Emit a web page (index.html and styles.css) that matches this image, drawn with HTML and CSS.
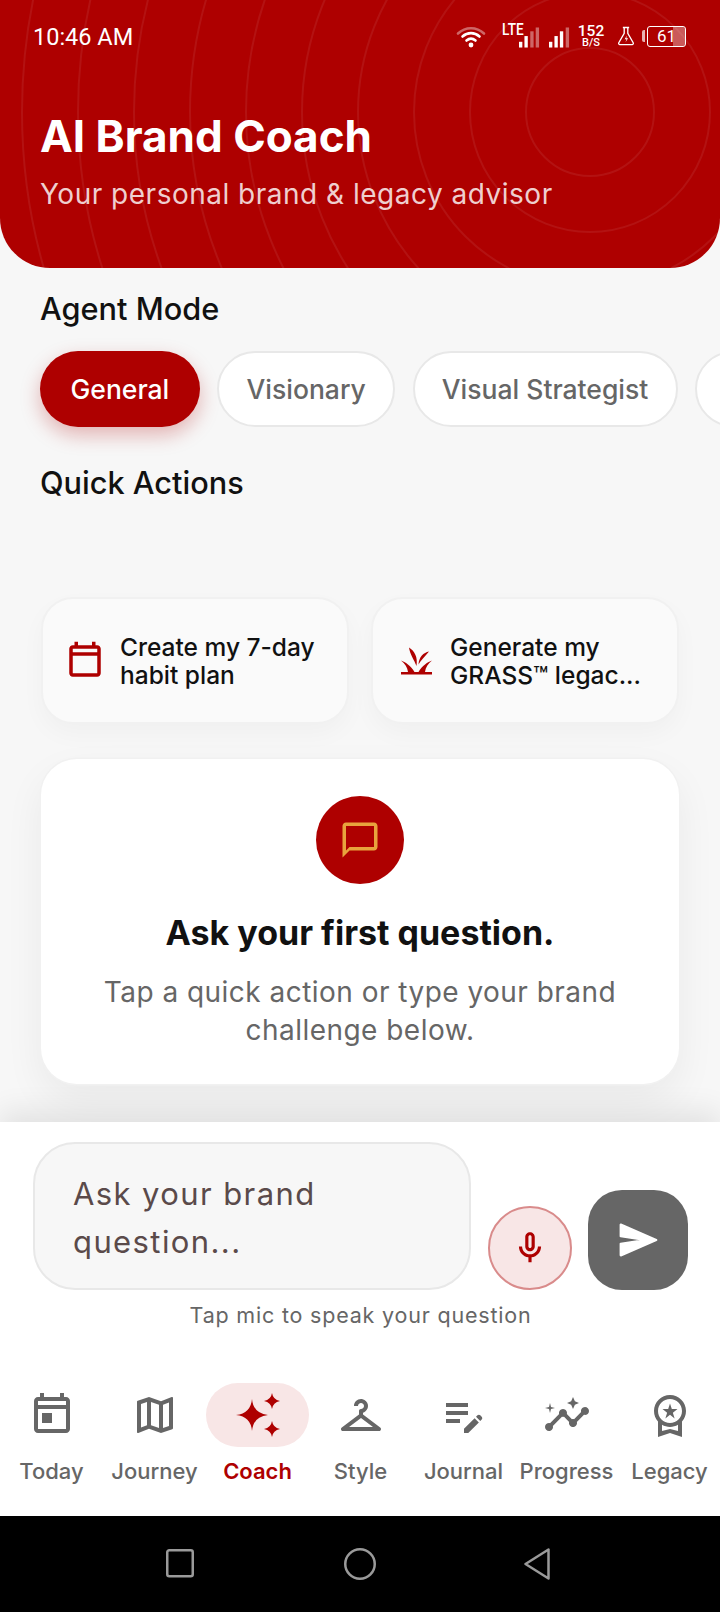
FILE: index.html
```html
<!DOCTYPE html>
<html lang="en">
<head>
<meta charset="utf-8">
<title>AI Brand Coach</title>
<link rel="stylesheet" href="styles.css">
</head>
<body>
<div class="phone">
  <header class="hero">
    <svg class="rings" viewBox="0 0 720 268" aria-hidden="true">
      <circle cx="590" cy="112" r="64"/><circle cx="590" cy="112" r="120"/><circle cx="590" cy="112" r="176"/><circle cx="590" cy="112" r="232"/><circle cx="590" cy="112" r="288"/><circle cx="590" cy="112" r="344"/><circle cx="590" cy="112" r="400"/><circle cx="590" cy="112" r="456"/><circle cx="590" cy="112" r="512"/><circle cx="590" cy="112" r="568"/>
    </svg>
    <div class="status">
      <span class="time">10:46 AM</span>
      <div class="status-icons">
        <svg class="ic-wifi" viewBox="0 0 30 24"><path class="dim" d="M2 9.500C9.500 2.500 20.500 2.500 28 9.500" /><path d="M6.500 12.500C11.500 8 18.500 8 23.500 12.500M10.500 16.500C13.500 14 16.500 14 19.500 16.500"/><circle cx="15" cy="21" r="2.400"/></svg>
        <div class="lte"><span class="lte-text">LTE</span>
          <svg class="bars" viewBox="0 0 22 21"><rect x="0" y="15" width="3.500" height="6"/><rect x="5.700" y="9" width="3.500" height="12"/><rect class="dimf" x="11.800" y="4" width="3.500" height="17"/><rect class="dimf" x="17.500" y="0" width="3.500" height="21"/></svg>
        </div>
        <svg class="bars bars2" viewBox="0 0 22 21"><rect x="0" y="15" width="3.500" height="6"/><rect x="5.700" y="9" width="3.500" height="12"/><rect x="11.400" y="4" width="3.500" height="17"/><rect class="dimf" x="17.500" y="0" width="3.500" height="21"/></svg>
        <div class="speed"><span>152</span><span class="unit">B/S</span></div>
        <svg class="flask" viewBox="0 0 20 22"><path d="M6.500 1.500h7M8 1.500v6.500L2 18.500c-.5 1 .2 2 1.200 2h13.600c1 0 1.700-1 1.200-2L12 8V1.500"/><path class="flash" d="M11 10.500l-2.500 4h2l-1 3.500 2.800-4.500h-2z"/></svg>
        <div class="battery"><span class="nub"></span><div class="cell"><span class="fill"></span><span class="level">61</span></div></div>
      </div>
    </div>
    <h1 class="title">AI Brand Coach</h1>
    <p class="subtitle">Your personal brand &amp; legacy advisor</p>
  </header>

  <main class="content">
    <h2 class="section">Agent Mode</h2>
    <div class="chips">
      <span class="chip chip-on">General</span>
      <span class="chip">Visionary</span>
      <span class="chip">Visual Strategist</span>
      <span class="chip chip-more"></span>
    </div>
    <h2 class="section section-qa">Quick Actions</h2>
    <div class="actions">
      <div class="action">
        <svg class="action-ic" viewBox="0 0 24 24"><path d="M19 3h-1V1h-2v2H8V1H6v2H5c-1.100 0-2 .9-2 2v14c0 1.100.9 2 2 2h14c1.100 0 2-.9 2-2V5c0-1.100-.9-2-2-2zm0 16H5V9h14v10zm0-12H5V5h14v2z"/></svg>
        <span class="action-text">Create my 7-day<br>habit plan</span>
      </div>
      <div class="action">
        <svg class="action-ic" viewBox="2 5.500 42 42"><path d="M9 37.500h31V40H9zM9 26c4 1.500 10 5 13.500 11.500H16C15.500 33 13 29 9 26zM40 26c-4 1.500-10 5-13.500 11.500H33C33.500 33 36 29 40 26zM17 13c5.500 3.500 9 9.500 7.500 18.500C22 25 18 20 17 13zM37 17c-5.500 1-10 5.500-10.500 13C29 25.500 33 22 37 17z"/></svg>
        <span class="action-text">Generate my<br>GRASS™ legac...</span>
      </div>
    </div>
    <section class="empty">
      <div class="empty-badge">
        <svg viewBox="0 0 24 24"><path d="M20 2H4c-1.100 0-2 .9-2 2v18l4-4h14c1.100 0 2-.9 2-2V4c0-1.100-.9-2-2-2zm0 14H6l-2 2V4h16v12z"/></svg>
      </div>
      <h3 class="empty-title">Ask your first question.</h3>
      <p class="empty-text">Tap a quick action or type your brand challenge below.</p>
    </section>
  </main>

  <section class="composer">
    <div class="composer-row">
      <div class="input">Ask your brand question...</div>
      <button class="mic" aria-label="Speak">
        <svg viewBox="0 0 24 24"><path d="M12 14c1.660 0 3-1.340 3-3V5c0-1.660-1.340-3-3-3S9 3.340 9 5v6c0 1.660 1.340 3 3 3zm-1-9c0-.55.45-1 1-1s1 .45 1 1v6c0 .55-.45 1-1 1s-1-.45-1-1V5zm6 6c0 2.760-2.240 5-5 5s-5-2.240-5-5H5c0 3.530 2.610 6.430 6 6.920V21h2v-3.080c3.390-.49 6-3.390 6-6.920h-2z"/></svg>
      </button>
      <button class="send" aria-label="Send">
        <svg viewBox="0 0 24 24"><path d="M3 20 21.500 12 3 4 3 10l13.500 2L3 14z"/></svg>
      </button>
    </div>
    <p class="hint">Tap mic to speak your question</p>
  </section>

  <nav class="tabs">
    <div class="tab"><span class="tab-ic"><svg viewBox="0 0 24 24"><path d="M19 3h-1V1h-2v2H8V1H6v2H5c-1.110 0-1.990.9-1.990 2L3 19c0 1.100.89 2 2 2h14c1.100 0 2-.9 2-2V5c0-1.100-.9-2-2-2zm0 16H5V9h14v10zm0-12H5V5h14v2zM7 11h5v5H7z"/></svg></span><span class="tab-label">Today</span></div>
    <div class="tab"><span class="tab-ic"><svg viewBox="0 0 24 24"><path d="M20.500 3l-.16.03L15 5.100 9 3 3.360 4.900c-.21.07-.36.25-.36.48V20.500c0 .28.22.5.5.5l.16-.03L9 18.900l6 2.100 5.640-1.900c.21-.07.36-.25.36-.48V3.500c0-.28-.22-.5-.5-.5zM10 5.470l4 1.400v11.660l-4-1.400V5.470zm-5 .99l3-1.010v11.700l-3 1.160V6.460zm14 11.080l-3 1.010V6.860l3-1.160v11.840z"/></svg></span><span class="tab-label">Journey</span></div>
    <div class="tab tab-on"><span class="tab-ic"><svg viewBox="0 0 24 24"><path d="M19 9q.5-3.300 4-4-3.500-.7-4-4-.5 3.300-4 4 3.500.7 4 4zM9 4q-.6 7.200-8 8 7.400.8 8 8 .6-7.200 8-8-7.400-.8-8-8zM19 15q-.5 3.300-4 4 3.500.7 4 4 .5-3.300 4-4-3.500-.7-4-4z"/></svg></span><span class="tab-label">Coach</span></div>
    <div class="tab"><span class="tab-ic"><svg viewBox="0 0 24 24"><path d="M21.600 18.200L13 11.750v-.91c1.650-.49 2.800-2.170 2.430-4.050-.26-1.310-1.300-2.400-2.610-2.700C10.540 3.570 8.500 5.300 8.500 7.500h2c0-.83.67-1.500 1.500-1.500s1.500.67 1.500 1.500c0 .84-.69 1.520-1.530 1.500-.54-.01-.97.45-.97.99v1.760L2.400 18.200c-.77.58-.36 1.800.6 1.800h18c.96 0 1.370-1.220.6-1.800zM6 18l6-4.500 6 4.500H6z"/></svg></span><span class="tab-label">Style</span></div>
    <div class="tab"><span class="tab-ic"><svg viewBox="0 0 24 24"><path d="M3 10h11v2H3v-2zm0-2h11V6H3v2zm0 8h7v-2H3v2zm15.010-3.130l.71-.71c.39-.39 1.020-.39 1.410 0l.71.71c.39.39.39 1.020 0 1.410l-.71.71-2.120-2.120zm-.71.71l-5.300 5.300V21h2.120l5.300-5.300-2.120-2.120z"/></svg></span><span class="tab-label">Journal</span></div>
    <div class="tab"><span class="tab-ic"><svg viewBox="0 0 24 24"><path d="M21 8c-1.450 0-2.260 1.440-1.930 2.510l-3.550 3.560c-.3-.09-.74-.09-1.040 0l-2.550-2.550C12.270 10.450 11.460 9 10 9c-1.450 0-2.270 1.440-1.930 2.520l-4.560 4.550C2.440 15.740 1 16.550 1 18c0 1.100.9 2 2 2 1.450 0 2.260-1.440 1.930-2.510l4.550-4.560c.3.09.74.09 1.040 0l2.550 2.550C12.730 16.550 13.540 18 15 18c1.450 0 2.270-1.440 1.930-2.520l3.560-3.550c1.070.33 2.510-.48 2.510-1.930 0-1.100-.9-2-2-2z"/><path d="M15 9l.94-2.070L18 6l-2.060-.93L15 3l-.92 2.070L12 6l2.080.93zM3.500 11L4 9l2-.5L4 8l-.5-2L3 8l-2 .5L3 9z"/></svg></span><span class="tab-label">Progress</span></div>
    <div class="tab"><span class="tab-ic"><svg viewBox="0 0 24 24"><path d="M9.680 13.690 12 11.930l2.310 1.760-.88-2.850L15.750 9h-2.840L12 6.190 11.090 9H8.250l2.310 1.840-.88 2.850zM20 10c0-4.420-3.580-8-8-8s-8 3.580-8 8c0 2.030.76 3.870 2 5.280V23l6-2 6 2v-7.720c1.240-1.410 2-3.250 2-5.280zm-8-6c3.310 0 6 2.690 6 6s-2.690 6-6 6-6-2.690-6-6 2.690-6 6-6zm0 15-4 1.020v-3.100c1.180.68 2.540 1.080 4 1.080s2.820-.4 4-1.080v3.100L12 19z"/></svg></span><span class="tab-label">Legacy</span></div>
  </nav>

  <footer class="sysbar">
    <svg viewBox="0 0 32 32"><rect x="3.250" y="2.250" width="25.500" height="26" rx="2"/></svg>
    <svg viewBox="0 0 32 32"><circle cx="16" cy="16" r="14.750"/></svg>
    <svg viewBox="0 0 32 32"><path d="M1.500 16 24.500 1.500 24.500 30.500z"/></svg>
  </footer>
</div>
</body>
</html>
```

FILE: styles.css
```css
* { box-sizing: border-box; margin: 0; padding: 0; }
html, body { width: 720px; height: 1612px; overflow: hidden; }
body { font-family: Inter, "Liberation Sans", sans-serif; background: #f7f7f7; color: #111; }
button { border: 0; font: inherit; }

.phone { width: 720px; height: 1612px; display: flex; flex-direction: column; overflow: hidden; background: #f7f7f7; }

.hero { position: relative; flex: none; height: 268px; padding: 0 34px 0 40px; background: #ae0000; border-radius: 0 0 50px 50px; overflow: hidden; color: #fff; }
.rings { position: absolute; inset: 0; width: 720px; height: 268px; fill: none; stroke: rgba(255,255,255,.07); stroke-width: 2; }

.status { position: relative; height: 72px; margin-left: -7px; display: flex; align-items: center; justify-content: space-between; }
.time { margin-top: 3px; font: 400 23.500px/1 Roboto, sans-serif; }
.status-icons { display: flex; align-items: center; height: 28px; }
.ic-wifi { width: 30px; height: 24px; margin-right: 16px; fill: #fff; stroke: none; }
.ic-wifi path { fill: none; stroke: #fff; stroke-width: 2.600; stroke-linecap: round; }
.ic-wifi .dim { stroke: rgba(255,255,255,.4); }
.lte { position: relative; width: 38px; height: 24px; margin-right: 9px; }
.lte-text { position: absolute; left: 0; top: -3px; font: 500 16px/18px Roboto, sans-serif; transform: scaleX(.85); transform-origin: left; }
.bars { display: block; fill: #fff; }
.lte .bars { position: absolute; right: 0; bottom: 0; width: 21px; height: 21px; }
.bars2 { width: 21px; height: 21px; margin-right: 9px; margin-top: 3px; }
.dimf { fill: rgba(255,255,255,.4); }
.speed { display: flex; flex-direction: column; align-items: center; width: 24px; margin-right: 14px; font: 500 15.500px/13px Roboto, sans-serif; }
.unit { font-size: 11px; line-height: 10px; }
.flask { width: 18px; height: 20px; margin-right: 7px; fill: none; stroke: #fff; stroke-width: 1.500; }
.flask .flash { fill: #fff; stroke: none; }
.battery { display: flex; align-items: center; }
.nub { width: 3px; height: 12px; margin-right: 2px; background: rgba(255,255,255,.7); border-radius: 2px 0 0 2px; }
.cell { position: relative; width: 39px; height: 21px; border: 1.500px solid #fff; border-radius: 3px; text-align: center; overflow: hidden; }
.fill { position: absolute; right: 0; top: 0; bottom: 0; width: 12px; background: rgba(255,255,255,.35); }
.level { position: relative; display: block; font: 400 17px/18px Roboto, sans-serif; }

.title { position: relative; margin-top: 36px; font-size: 44px; line-height: 56px; font-weight: 700; }
.subtitle { position: relative; margin-top: 12px; font-size: 28px; line-height: 36px; font-weight: 400; letter-spacing: .5px; color: rgba(255,255,255,.82); }

.content { flex: 1; min-height: 0; padding: 21px 0 0 40px; overflow: hidden; }
.section { font-size: 30.700px; line-height: 40px; font-weight: 500; color: #111; }
.section-qa { margin-top: 36px; }

.chips { display: flex; gap: 17.500px; margin-top: 22px; width: 760px; }
.chip { flex: none; height: 76px; padding: 0 27.250px; display: flex; align-items: center; border: 2px solid #e8e8e8; border-radius: 38px; background: #fff; font-size: 26.500px; font-weight: 500; color: #666; }
.chip-on { padding: 0 30.500px; border: 0; background: #ae0000; color: #fff; box-shadow: 0 8px 20px rgba(174,0,0,.28); }
.chip-more { width: 100px; }

.actions { display: flex; gap: 22px; margin: 94px 0 0 1px; width: 638px; }
.action { flex: 1; height: 127px; padding: 0 16px 0 21px; display: flex; align-items: center; gap: 14px; border: 2px solid #f1f1f1; border-radius: 32px; background: #fafafa; box-shadow: 0 10px 24px rgba(0,0,0,.03); }
.action-ic { flex: none; width: 42px; height: 42px; fill: #ae0000; }
.action-text { font-size: 24.500px; line-height: 28px; font-weight: 500; color: #111; white-space: nowrap; }

.empty { width: 638px; height: 325px; margin: 35px 0 0 1px; padding-top: 37px; display: flex; flex-direction: column; align-items: center; border-radius: 36px; background: #fff; box-shadow: 0 0 0 1.500px #f1f1f1, 0 16px 40px rgba(0,0,0,.06); }
.empty-badge { width: 88px; height: 88px; display: flex; align-items: center; justify-content: center; border-radius: 50%; background: #ae0000; }
.empty-badge svg { width: 42px; height: 42px; fill: #e8a33d; }
.empty-title { margin-top: 27px; font-size: 34px; line-height: 44px; font-weight: 700; color: #111; }
.empty-text { margin-top: 18px; width: 560px; text-align: center; font-size: 28px; line-height: 38px; letter-spacing: .47px; color: #666; }

.composer { position: relative; flex: none; height: 258px; padding: 20px 32px 0 33px; background: #fff; box-shadow: 0 -10px 28px rgba(0,0,0,.09); }
.composer-row { display: flex; align-items: flex-end; }
.input { width: 438px; height: 148px; padding: 26px 38px; border: 2px solid #e8e8e8; border-radius: 42px; background: #f7f7f7; font-size: 31px; line-height: 48px; letter-spacing: 1.400px; color: #5a4a4a; }
.mic { width: 84px; height: 84px; margin-left: 17px; display: flex; align-items: center; justify-content: center; border: 2px solid #d98b8b; border-radius: 50%; background: #f8e6e6; }
.mic svg { width: 38px; height: 38px; fill: #ae0000; }
.send { width: 100px; height: 100px; margin-left: 16px; display: flex; align-items: center; justify-content: center; border-radius: 34px; background: #666; }
.send svg { width: 46px; height: 46px; fill: #fff; stroke: #fff; stroke-width: 1.200; stroke-linejoin: round; }
.hint { margin-top: 11px; text-align: center; font-size: 21.500px; line-height: 28px; letter-spacing: .8px; color: #666; }

.tabs { position: relative; flex: none; height: 136px; padding-top: 3px; display: grid; grid-template-columns: repeat(7, 1fr); background: #fff; }
.tab { display: flex; flex-direction: column; align-items: center; color: #666; }
.tab-ic { width: 103px; height: 64px; display: flex; align-items: center; justify-content: center; border-radius: 32px; }
.tab-ic svg { width: 48px; height: 48px; fill: currentColor; }
.tab-label { margin-top: 8px; font-size: 22px; line-height: 32px; font-weight: 500; white-space: nowrap; }
.tab-on { color: #ae0000; }
.tab-on .tab-label { font-weight: 600; }
.tab-on .tab-ic { background: #f8e6e6; }

.sysbar { flex: none; height: 96px; display: flex; align-items: center; justify-content: center; gap: 148px; background: #000; }
.sysbar svg { width: 32px; height: 32px; fill: none; stroke: #9a9a9a; stroke-width: 2.500; stroke-linejoin: round; }
```
